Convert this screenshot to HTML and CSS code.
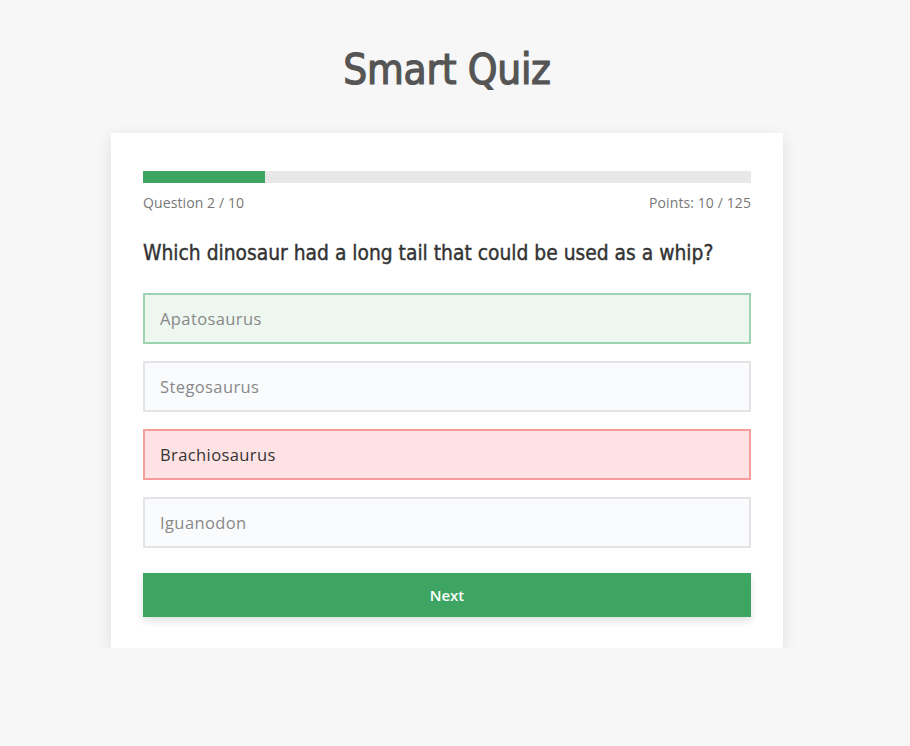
FILE: index.html
```html
<!DOCTYPE html>
<html lang="en">
<head>
<meta charset="utf-8">
<title>Smart Quiz</title>
<link rel="stylesheet" href="styles.css">
</head>
<body>
<main class="page">
  <h1 class="title">Smart Quiz</h1>
  <section class="card">
    <div class="progress"><div class="progress-fill" style="width:20%"></div></div>
    <div class="meta">
      <span>Question 2 / 10</span>
      <span>Points: 10 / 125</span>
    </div>
    <h2 class="question">Which dinosaur had a long tail that could be used as a whip?</h2>
    <ul class="options">
      <li class="option correct">Apatosaurus</li>
      <li class="option">Stegosaurus</li>
      <li class="option wrong">Brachiosaurus</li>
      <li class="option">Iguanodon</li>
    </ul>
    <button class="next">Next</button>
  </section>
</main>
</body>
</html>
```

FILE: styles.css
```css
html, body {
  margin: 0;
  padding: 0;
}
body {
  background: #f7f7f7;
  font-family: "Open Sans", "Noto Sans", sans-serif;
  color: #555;
}
.page {
  display: flex;
  flex-direction: column;
  align-items: center;
  padding-top: 38px;
  padding-right: 16px;
}
.title {
  margin: 0;
  font-family: "DejaVu Sans Condensed", "DejaVu Sans", sans-serif;
  font-weight: normal;
  font-size: 42px;
  line-height: 64px;
  color: #555;
  letter-spacing: -0.3px;
  -webkit-text-stroke: 1.2px #555;
}
.card {
  box-sizing: border-box;
  width: 672px;
  margin-top: 31px;
  padding: 38px 32px 31px;
  background: #fff;
  box-shadow: 0 4px 14px rgba(0, 0, 0, 0.1);
}
.progress {
  height: 12px;
  background: #e8e8e8;
}
.progress-fill {
  height: 100%;
  background: #3ea462;
}
.meta {
  display: flex;
  justify-content: space-between;
  margin-top: 10px;
  font-size: 14px;
  line-height: 20px;
  letter-spacing: 0.1px;
  color: #777;
}
.question {
  margin: 26px 0 0;
  font-family: "DejaVu Sans Condensed", "DejaVu Sans", sans-serif;
  font-weight: normal;
  font-size: 20.8px;
  line-height: 28px;
  color: #333;
  -webkit-text-stroke: 0.4px #333;
}
.options {
  list-style: none;
  margin: 26px 0 0;
  padding: 0;
  display: flex;
  flex-direction: column;
  gap: 17px;
}
.option {
  box-sizing: border-box;
  height: 51px;
  display: flex;
  align-items: center;
  padding: 0 15px;
  border: 2px solid #e4e4e6;
  background: #fafbfd;
  font-size: 16.5px;
  letter-spacing: 0.4px;
  color: #888;
}
.option.correct {
  border-color: #9dd3b0;
  background: #edf7f0;
}
.option.wrong {
  border-color: #f79e9d;
  background: #ffe3e4;
  color: #333;
}
.next {
  display: block;
  width: 100%;
  height: 44px;
  margin-top: 25px;
  border: 0;
  background: #3ea462;
  color: #fff;
  font-family: "Open Sans", "Noto Sans", sans-serif;
  font-weight: 600;
  font-size: 15px;
  box-shadow: 0 4px 8px rgba(0, 0, 0, 0.12);
  cursor: pointer;
}
```
